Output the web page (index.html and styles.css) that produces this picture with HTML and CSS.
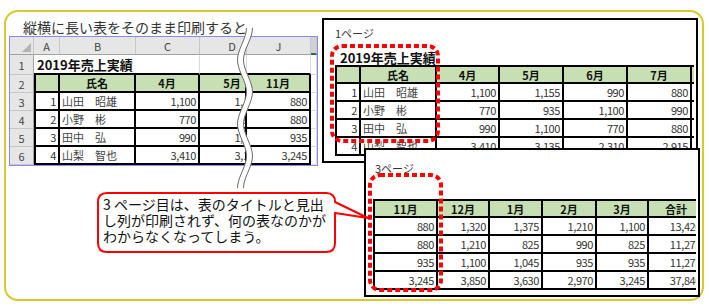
FILE: index.html
```html
<!DOCTYPE html>
<html lang="ja">
<head>
<meta charset="utf-8">
<link rel="stylesheet" href="styles.css">
</head>
<body>
<div class="frame">
  <div class="left-title">縦横に長い表をそのまま印刷すると</div>
  <div class="sheet">
    <div class="ch corner"><span class="tri"></span></div>
    <div class="ch">A</div>
    <div class="ch">B</div>
    <div class="ch">C</div>
    <div class="ch cut"><span class="dw ctr">D</span></div>
    <div class="ch">J</div>
    <div class="ch sel"></div>

    <div class="rh">1</div>
    <div class="gc title">2019年売上実績</div>
    <div class="gc tb"></div>
    <div class="gc tb"></div>
    <div class="gc tb"></div>
    <div class="gc"></div>

    <div class="rh">2</div>
    <div class="tc hd first"></div>
    <div class="tc hd">氏名</div>
    <div class="tc hd">4月</div>
    <div class="tc hd cut"><span class="dw ctr">5月</span></div>
    <div class="tc hd">11月</div>
    <div class="gc"></div>

    <div class="rh">3</div>
    <div class="tc first num">1</div>
    <div class="tc name">山田　昭雄</div>
    <div class="tc num">1,100</div>
    <div class="tc cut"><span class="dw">1,155</span></div>
    <div class="tc num">880</div>
    <div class="gc"></div>

    <div class="rh">4</div>
    <div class="tc first num">2</div>
    <div class="tc name">小野　彬</div>
    <div class="tc num">770</div>
    <div class="tc cut"><span class="dw">935</span></div>
    <div class="tc num">880</div>
    <div class="gc"></div>

    <div class="rh">5</div>
    <div class="tc first num">3</div>
    <div class="tc name">田中　弘</div>
    <div class="tc num">990</div>
    <div class="tc cut"><span class="dw">1,100</span></div>
    <div class="tc num">935</div>
    <div class="gc"></div>

    <div class="rh">6</div>
    <div class="tc first num">4</div>
    <div class="tc name">山梨　智也</div>
    <div class="tc num">3,410</div>
    <div class="tc cut"><span class="dw">3,135</span></div>
    <div class="tc num">3,245</div>
    <div class="gc"></div>
  </div>
</div>

<div class="page p1">
  <div class="plabel">1ページ</div>
  <div class="ptitle">2019年売上実績</div>
  <div class="pwrap w1">
    <div class="ptable t1">
      <div class="tc hd"></div>
      <div class="tc hd">氏名</div>
      <div class="tc hd">4月</div>
      <div class="tc hd">5月</div>
      <div class="tc hd">6月</div>
      <div class="tc hd">7月</div>
      <div class="tc hd">8月</div>

      <div class="tc num">1</div>
      <div class="tc name">山田　昭雄</div>
      <div class="tc num">1,100</div>
      <div class="tc num">1,155</div>
      <div class="tc num">990</div>
      <div class="tc num">880</div>
      <div class="tc num"></div>

      <div class="tc num">2</div>
      <div class="tc name">小野　彬</div>
      <div class="tc num">770</div>
      <div class="tc num">935</div>
      <div class="tc num">1,100</div>
      <div class="tc num">990</div>
      <div class="tc num"></div>

      <div class="tc num">3</div>
      <div class="tc name">田中　弘</div>
      <div class="tc num">990</div>
      <div class="tc num">1,100</div>
      <div class="tc num">770</div>
      <div class="tc num">880</div>
      <div class="tc num"></div>

      <div class="tc num">4</div>
      <div class="tc name">山梨　智也</div>
      <div class="tc num">3,410</div>
      <div class="tc num">3,135</div>
      <div class="tc num">2,310</div>
      <div class="tc num">2,915</div>
      <div class="tc num"></div>
    </div>
  </div>
</div>

<div class="page p3">
  <div class="plabel">3ページ</div>
  <div class="pwrap w3">
    <div class="ptable t3">
      <div class="tc hd">11月</div>
      <div class="tc hd">12月</div>
      <div class="tc hd">1月</div>
      <div class="tc hd">2月</div>
      <div class="tc hd">3月</div>
      <div class="tc hd">合計</div>

      <div class="tc num">880</div>
      <div class="tc num">1,320</div>
      <div class="tc num">1,375</div>
      <div class="tc num">1,210</div>
      <div class="tc num">1,100</div>
      <div class="tc num">13,420</div>

      <div class="tc num">880</div>
      <div class="tc num">1,210</div>
      <div class="tc num">825</div>
      <div class="tc num">990</div>
      <div class="tc num">825</div>
      <div class="tc num">11,275</div>

      <div class="tc num">935</div>
      <div class="tc num">1,100</div>
      <div class="tc num">1,045</div>
      <div class="tc num">935</div>
      <div class="tc num">935</div>
      <div class="tc num">11,275</div>

      <div class="tc num">3,245</div>
      <div class="tc num">3,850</div>
      <div class="tc num">3,630</div>
      <div class="tc num">2,970</div>
      <div class="tc num">3,245</div>
      <div class="tc num">37,840</div>
    </div>
  </div>
</div>

<svg class="overlay" width="709" height="307" viewBox="0 0 709 307" xmlns="http://www.w3.org/2000/svg">
  <g transform="translate(230,26)">
    <path d="M19.5,2 C19.5,12.7 10.5,23.3 10.5,34 C10.5,44.7 19.5,55.3 19.5,66 C19.5,76.7 10.5,87.3 10.5,98 C10.5,108.7 19.5,119.3 19.5,130 C19.5,140.7 10.5,151.3 10.5,162" fill="none" stroke="#fff" stroke-width="6"/>
    <path d="M16.5,2 C16.5,12.7 7.5,23.3 7.5,34 C7.5,44.7 16.5,55.3 16.5,66 C16.5,76.7 7.5,87.3 7.5,98 C7.5,108.7 16.5,119.3 16.5,130 C16.5,140.7 7.5,151.3 7.5,162" fill="none" stroke="#6a6a6a" stroke-width="1"/>
    <path d="M22.5,2 C22.5,12.7 13.5,23.3 13.5,34 C13.5,44.7 22.5,55.3 22.5,66 C22.5,76.7 13.5,87.3 13.5,98 C13.5,108.7 22.5,119.3 22.5,130 C22.5,140.7 13.5,151.3 13.5,162" fill="none" stroke="#6a6a6a" stroke-width="1"/>
  </g>
  <rect x="332" y="46" width="106" height="95" rx="10" fill="none" stroke="#ff0000" stroke-width="4" stroke-dasharray="5 3"/>
  <rect x="370" y="175" width="71" height="115" rx="10" fill="none" stroke="#ff0000" stroke-width="4" stroke-dasharray="5 3"/>
  <path d="M107,193 H326 Q335,193 335,202 L368,218 L335,213 V243 Q335,252 326,252 H107 Q98,252 98,243 V202 Q98,193 107,193 Z" fill="#fff" stroke="#ff0000" stroke-width="2" stroke-linejoin="round"/>
</svg>

<div class="callout-text">3 ページ目は、表のタイトルと見出<br>し列が印刷されず、何の表なのかが<br>わからなくなってしまう。</div>
</body>
</html>
```

FILE: styles.css
```css
* { box-sizing: border-box; }
html, body { margin: 0; padding: 0; }
body {
  width: 709px;
  height: 307px;
  position: relative;
  overflow: hidden;
  background: #fff;
  font-family: "Noto Sans CJK JP", "Noto Sans", sans-serif;
  color: #222;
}

.frame {
  margin: 10px 0 0 4px;
  width: 700px;
  height: 291px;
  border: 2px solid #d9c92b;
  border-radius: 14px;
  padding: 6px 0 0 3px;
}

.left-title {
  margin-left: 14px;
  font-size: 14px;
  line-height: 18px;
  color: #333;
  white-space: nowrap;
}

/* Excel sheet */
.sheet {
  display: grid;
  width: 309px;
  grid-template-columns: 24px 26px 76px 64px 47px 64px 6px;
  grid-template-rows: 18px 20px 18px 18px 18px 18px 18px;
  border: 1px solid #8a8aee;
  font-size: 11px;
  background: #fff;
}
.sheet > div,
.ptable > div {
  display: flex;
  align-items: center;
  overflow: hidden;
  white-space: nowrap;
}
.ch {
  background: #e6e6e6;
  border-right: 1px solid #c6c6c6;
  border-bottom: 1px solid #a2a2a2;
  justify-content: center;
  color: #444;
}
.ch.corner {
  justify-content: flex-end;
  align-items: flex-end;
  padding: 0 2px 2px 0;
}
.tri {
  width: 0;
  height: 0;
  border-left: 9px solid transparent;
  border-bottom: 9px solid #b4b4b4;
}
.ch.sel {
  background: #d2d2d2;
  border-bottom: 2px solid #217346;
}
.rh {
  background: #e6e6e6;
  border-right: 1px solid #a2a2a2;
  border-bottom: 1px solid #c6c6c6;
  justify-content: center;
  color: #444;
}
.gc {
  border-right: 1px solid #dadada;
  border-bottom: 1px solid #dadada;
}
.gc.tb { border-bottom: 2px solid #000; }
.title {
  grid-column: span 2;
  font-weight: bold;
  font-size: 13px;
  padding-left: 3px;
  border-right: none;
  border-bottom: 2px solid #000;
  color: #111;
}

.tc {
  border-right: 2px solid #000;
  border-bottom: 2px solid #000;
  padding: 0 2px;
  color: #333;
}
.tc.first { border-left: 2px solid #000; }
.hd {
  background: #c6e0b4;
  font-weight: bold;
  justify-content: center;
  color: #111;
}
.num {
  justify-content: flex-end;
  letter-spacing: -0.4px;
}
.name { color: #444; }
.cut { padding: 0; justify-content: flex-start; }
.dw {
  flex: none;
  width: 62px;
  text-align: right;
  padding-right: 2px;
  letter-spacing: -0.4px;
}
.dw.ctr { text-align: center; padding-right: 0; width: 64px; letter-spacing: 0; }

/* printed pages */
.page {
  position: absolute;
  background: #fff;
  border: 2px solid #000;
}
.p1 {
  left: 322px;
  top: 18px;
  width: 376px;
  height: 145px;
  padding: 7px 0 0 11px;
}
.p3 {
  left: 364px;
  top: 148px;
  width: 336px;
  height: 149px;
  padding: 12px 0 0 9px;
}
.plabel {
  font-size: 11px;
  line-height: 13px;
  color: #333;
}
.ptitle {
  margin-top: 10px;
  padding-left: 5px;
  font-size: 13px;
  line-height: 15px;
  font-weight: bold;
  color: #111;
  white-space: nowrap;
}
.pwrap { overflow: hidden; }
.w1 { width: 359px; }
.w3 { width: 323px; margin-left: -2px; margin-top: 24px; }
.ptable {
  display: grid;
  border-top: 2px solid #000;
  border-left: 2px solid #000;
  font-size: 11px;
}
.t1 {
  grid-template-columns: 24px 76px 63px 64px 64px 64px 40px;
  grid-template-rows: 17px 18px 18px 18px 18px;
  width: 413px;
}
.t3 {
  grid-template-columns: 63px 52px 53px 54px 52px 56px;
  grid-template-rows: 17px 18px 18px 18px 18px;
  width: 332px;
}

.overlay {
  position: absolute;
  left: 0;
  top: 0;
  pointer-events: none;
}

.callout-text {
  position: absolute;
  left: 103px;
  top: 196px;
  font-size: 14px;
  line-height: 16px;
  color: #111;
  white-space: nowrap;
}
```
